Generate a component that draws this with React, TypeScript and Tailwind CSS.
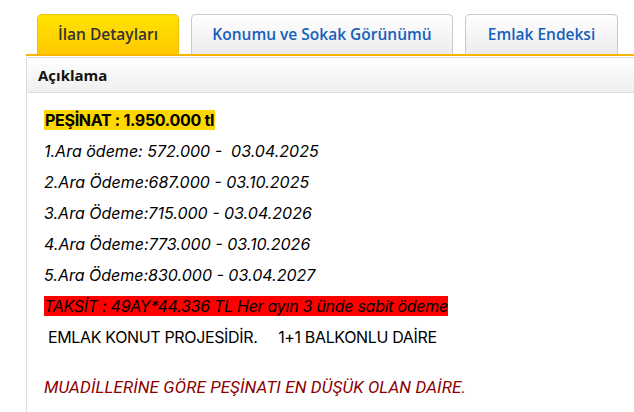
import React from "react";

export default function App() {
  const body = { fontFamily: 'Inter, "Liberation Sans", sans-serif' };
  return (
    <div className="w-[634px] h-[412px] overflow-hidden bg-white" style={{ fontFamily: '"Open Sans", "Liberation Sans", sans-serif' }}>
      <div className="pt-[14px] pl-[37px] flex gap-[12px] items-end">
        <div className="w-[142px] h-[40px] rounded-t-[5px] border border-[#f2c200] border-b-0 bg-gradient-to-b from-[#ffe400] to-[#ffc800] flex items-center justify-center text-[15.5px] font-semibold text-[#333]">
          İlan Detayları
        </div>
        <div className="w-[262px] h-[40px] rounded-t-[5px] border border-[#c8c8c8] border-b-0 bg-gradient-to-b from-[#ffffff] to-[#ececec] flex items-center justify-center text-[15.5px] font-semibold text-[#1560bd]">
          Konumu ve Sokak Görünümü
        </div>
        <div className="w-[153px] h-[40px] rounded-t-[5px] border border-[#c8c8c8] border-b-0 bg-gradient-to-b from-[#ffffff] to-[#ececec] flex items-center justify-center text-[15.5px] font-semibold text-[#1560bd]">
          Emlak Endeksi
        </div>
      </div>
      <div className="ml-[26px] h-[2px] bg-[#f7b500]" />
      <div className="ml-[26px] mt-[1px] border-l border-[#dcdcdc] h-[400px]">
        <div className="h-[36px] border-t border-b border-[#dcdcdc] bg-gradient-to-b from-[#ffffff] to-[#efefef] flex items-center pl-[11px] text-[15px] font-bold text-[#111]">
          Açıklama
        </div>
        <div className="pl-[17px] pt-[17px] text-[16px] text-black" style={body}>
          <div className="h-[31px] flex items-start">
            <span className="bg-[#ffd700] font-bold px-[1px] leading-[20px] tracking-[-0.3px]">PEŞİNAT : 1.950.000 tl</span>
          </div>
          <div className="h-[31px] italic leading-[20px]">1.Ara ödeme: 572.000 -&nbsp; 03.04.2025</div>
          <div className="h-[31px] italic leading-[20px]">2.Ara Ödeme:687.000 - 03.10.2025</div>
          <div className="h-[31px] italic leading-[20px]">3.Ara Ödeme:715.000 - 03.04.2026</div>
          <div className="h-[31px] italic leading-[20px]">4.Ara Ödeme:773.000 - 03.10.2026</div>
          <div className="h-[31px] italic leading-[20px]">5.Ara Ödeme:830.000 - 03.04.2027</div>
          <div className="h-[31px] flex items-start">
            <span className="bg-[#ff0000] italic leading-[20px] tracking-[-0.28px]">TAKSİT : 49AY*44.336 TL Her ayın 3 ünde sabit ödeme</span>
          </div>
          <div className="h-[50px] leading-[20px] pl-[4px] whitespace-pre tracking-[-0.35px]">EMLAK KONUT PROJESİDİR.     1+1 BALKONLU DAİRE</div>
          <div className="italic leading-[20px] text-[17px] tracking-[0.1px] text-[#8b0000]" style={{ fontFamily: 'Roboto, sans-serif' }}>
            MUADİLLERİNE GÖRE PEŞİNATI EN DÜŞÜK OLAN DAİRE.
          </div>
        </div>
      </div>
    </div>
  );
}
